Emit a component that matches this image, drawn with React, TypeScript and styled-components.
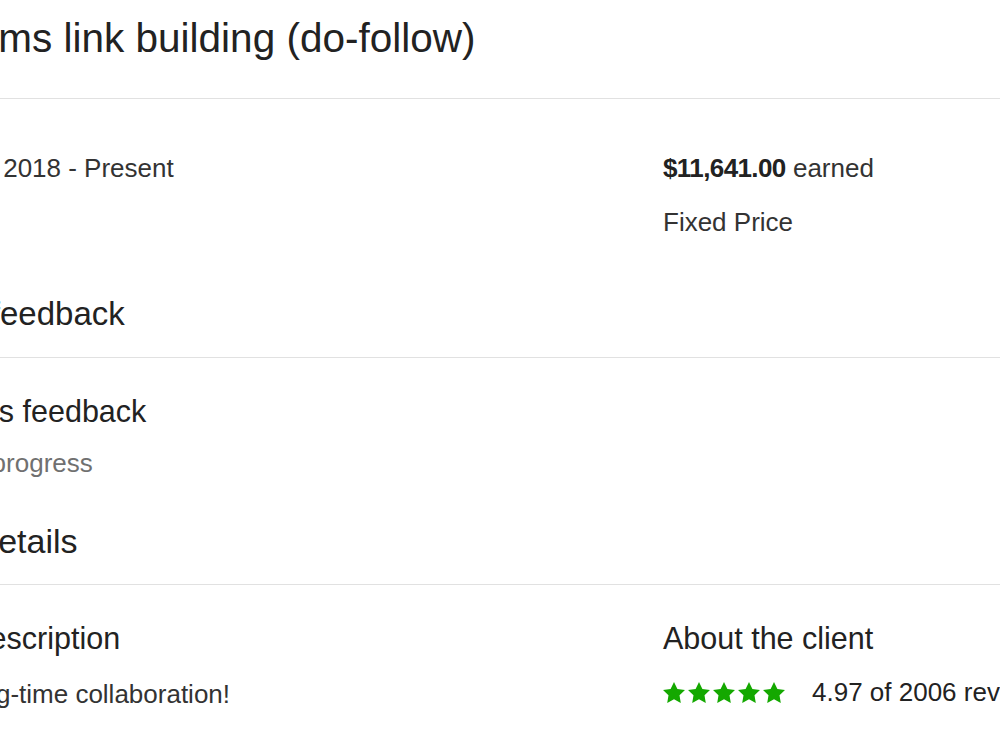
import React from 'react';
import styled, { createGlobalStyle } from 'styled-components';

const GlobalStyle = createGlobalStyle`
	html, body {
		margin: 0;
		padding: 0;
		background: #ffffff;
		overflow: hidden;
	}
	body {
		font-family: 'Liberation Sans', Arial, sans-serif;
		color: #222222;
	}
`;

function Star(): React.ReactElement {
	return (
		<StarSvg viewBox="2 2 20 19.1" aria-hidden="true">
			<path d="M12 2l3.09 6.26L22 9.27l-5 4.87 1.18 6.88L12 17.77l-6.18 3.25L7 14.14 2 9.27l6.91-1.01L12 2z" />
		</StarSvg>
	);
}

function App(): React.ReactElement {
	const rating = 5;

	return (
		<>
			<GlobalStyle />
			<Viewport>
				<Sheet>
					<Title>Forums link building (do-follow)</Title>
					<Divider />

					<TwoColumn $top={50}>
						<Column>
							<BodyText>August 2018 - Present</BodyText>
						</Column>
						<Column $gap={15}>
							<BodyText>
								<Amount>$11,641.00</Amount> earned
							</BodyText>
							<BodyText>Fixed Price</BodyText>
						</Column>
					</TwoColumn>

					<SectionHeading $top={52}>Your feedback</SectionHeading>
					<Divider />

					<Column $gap={15} $top={35}>
						<SubHeading>Client's feedback</SubHeading>
						<BodyText $muted>Job in progress</BodyText>
					</Column>

					<SectionHeading $top={38} $size={34}>
						Job details
					</SectionHeading>
					<Divider />

					<TwoColumn $top={35}>
						<Column $gap={19}>
							<SubHeading>Job description</SubHeading>
							<BodyText>For long-time collaboration!</BodyText>
						</Column>
						<Column $gap={17}>
							<SubHeading>About the client</SubHeading>
							<RatingRow>
								<Stars>
									{Array.from({ length: rating }).map((_, i) => (
										<Star key={i} />
									))}
								</Stars>
								<RatingText>4.97 of 2006 reviews</RatingText>
							</RatingRow>
						</Column>
					</TwoColumn>
				</Sheet>
			</Viewport>
		</>
	);
}

export default App;

const Viewport = styled.div`
	width: 1000px;
	height: 750px;
	overflow: hidden;
	background: #ffffff;
`;

// the page is shown zoomed in, so its left edge sits outside the window
const Sheet = styled.div`
	width: 1200px;
	margin-left: -85px;
	padding-top: 14px;
`;

const Title = styled.h1`
	margin: 0 0 36px;
	font-size: 40.5px;
	line-height: 48px;
	font-weight: 400;
	color: #222222;
	white-space: nowrap;
`;

const Divider = styled.hr`
	margin: 0;
	height: 1px;
	border: 0;
	background: #e1e1e1;
`;

const TwoColumn = styled.div<{ $top?: number }>`
	display: grid;
	grid-template-columns: 724px 1fr;
	column-gap: 24px;
	margin-top: ${(p) => p.$top ?? 0}px;
`;

const Column = styled.div<{ $gap?: number; $top?: number }>`
	display: flex;
	flex-direction: column;
	gap: ${(p) => p.$gap ?? 0}px;
	margin-top: ${(p) => p.$top ?? 0}px;
`;

const BodyText = styled.div<{ $muted?: boolean }>`
	font-size: 26px;
	line-height: 39px;
	color: ${(p) => (p.$muted ? '#707070' : '#333333')};
	white-space: nowrap;
`;

const Amount = styled.strong`
	font-weight: 700;
	letter-spacing: -0.6px;
	color: #222222;
`;

const SectionHeading = styled.h2<{ $top?: number; $size?: number }>`
	margin: ${(p) => p.$top ?? 0}px 0 23px;
	font-size: ${(p) => p.$size ?? 33}px;
	line-height: 40px;
	font-weight: 400;
	color: #222222;
	white-space: nowrap;
`;

const SubHeading = styled.h3`
	margin: 0;
	font-size: 30.5px;
	line-height: 36px;
	font-weight: 400;
	color: #222222;
	white-space: nowrap;
`;

const RatingRow = styled.div`
	display: flex;
	align-items: center;
	height: 39px;
`;

const Stars = styled.div`
	display: flex;
	gap: 3px;
`;

const StarSvg = styled.svg`
	width: 22px;
	height: 21px;
	fill: #14a800;
	display: block;
`;

const RatingText = styled.span`
	margin-left: 27px;
	font-size: 26px;
	line-height: 39px;
	color: #222222;
	white-space: nowrap;
`;
